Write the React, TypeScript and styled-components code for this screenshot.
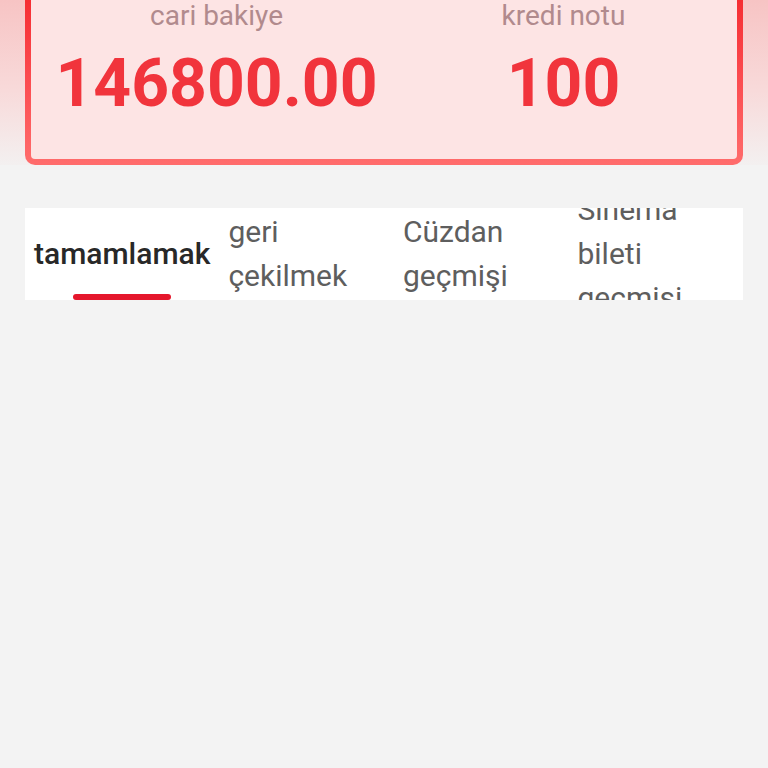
import React, { useState } from "react";
import styled, { createGlobalStyle } from "styled-components";

const GlobalStyle = createGlobalStyle`
  html, body {
    margin: 0;
    padding: 0;
    background: #f3f3f3;
    font-family: Roboto, "Noto Sans", "Liberation Sans", sans-serif;
  }
  #root {
    min-height: 100vh;
  }
`;

const Page = styled.div`
  min-height: 100vh;
  background: #f3f3f3;
  overflow: hidden;
`;

const Header = styled.div`
  display: flex;
  flex-direction: column;
  height: 165px;
  padding: 0 25px;
  box-sizing: border-box;
  background: linear-gradient(180deg, #f7c4c4 0%, #f8dada 55%, #f3f0f0 100%);
`;

const Card = styled.div`
  margin-top: -18px;
  padding: 6px;
  border-radius: 0 0 10px 10px;
  background: linear-gradient(180deg, #f4272c 0%, #fb4a4e 50%, #ff6c6c 100%);
`;

const CardInner = styled.div`
  display: grid;
  grid-template-columns: 1fr 1fr;
  padding: 12px 0 42px 12px;
  border-radius: 4px;
  background: #fde4e4;
`;

const Stat = styled.div`
  display: flex;
  flex-direction: column;
  align-items: center;
`;

const StatLabel = styled.div`
  font-size: 28px;
  line-height: 32px;
  color: #b18a8d;
`;

const StatValue = styled.div`
  margin-top: 19px;
  font-size: 66px;
  line-height: 66px;
  font-weight: 700;
  color: #f1343c;
`;

const TabBar = styled.div`
  display: flex;
  margin: 43px 25px 0;
  height: 92px;
  background: #ffffff;
  overflow: hidden;
`;

const Tab = styled.div<{ $active: boolean }>`
  position: relative;
  flex: 1 1 0;
  display: flex;
  align-items: center;
  padding: 0 9px;
  font-size: 30px;
  line-height: 44px;
  font-weight: ${(p) => (p.$active ? 500 : 400)};
  color: ${(p) => (p.$active ? "#282828" : "#5e5e5e")};
  cursor: pointer;
`;

const Indicator = styled.span`
  position: absolute;
  left: 50%;
  bottom: 0;
  width: 98px;
  height: 6px;
  border-radius: 3px;
  transform: translateX(-50%);
  background: #e5172c;
`;

const tabs = ["tamamlamak", "geri çekilmek", "Cüzdan geçmişi", "Sinema bileti geçmişi"];

const App: React.FC = () => {
  const [activeIndex, setActiveIndex] = useState(0);

  return (
    <Page>
      <GlobalStyle />
      <Header>
        <Card>
          <CardInner>
            <Stat>
              <StatLabel>cari bakiye</StatLabel>
              <StatValue>146800.00</StatValue>
            </Stat>
            <Stat>
              <StatLabel>kredi notu</StatLabel>
              <StatValue>100</StatValue>
            </Stat>
          </CardInner>
        </Card>
      </Header>

      <TabBar>
        {tabs.map((tab, index) => (
          <Tab
            key={index}
            $active={activeIndex === index}
            onClick={() => setActiveIndex(index)}
          >
            <span>{tab}</span>
            {activeIndex === index && <Indicator />}
          </Tab>
        ))}
      </TabBar>
    </Page>
  );
};

export default App;
